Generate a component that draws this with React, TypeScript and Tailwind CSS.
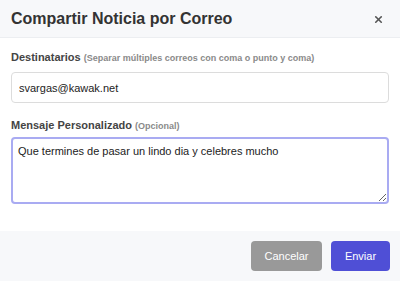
import { X } from 'lucide-react';

export default function App() {
  return (
    <div className="w-[400px] h-[281px] bg-white flex flex-col font-['Liberation_Sans',Arial,sans-serif] text-[#333]">
      <div className="h-[38px] bg-[#f7f8fa] border-b border-[#eceef1] flex items-center justify-between pl-[11px] pr-[16px]">
        <h2 className="text-[16px] font-bold text-[#333] leading-none">Compartir Noticia por Correo</h2>
        <X className="w-[11px] h-[11px] text-[#555] mt-[1px]" strokeWidth={3.5} />
      </div>

      <div className="flex-1 px-[11px] pt-[14px]">
        <label className="block text-[11px] font-bold text-[#444] leading-none mb-[9px]">
          Destinatarios{' '}
          <span className="text-[9px] text-[#8a8a8a]">(Separar múltiples correos con coma o punto y coma)</span>
        </label>
        <input
          className="w-full h-[31px] border border-[#dcdcdc] rounded-[4px] px-[7px] text-[11px] text-[#222] outline-none"
          defaultValue="svargas@kawak.net"
        />

        <label className="block text-[11px] font-bold text-[#444] leading-none mt-[17px] mb-[6px]">
          Mensaje Personalizado{' '}
          <span className="text-[9px] text-[#8a8a8a]">(Opcional)</span>
        </label>
        <textarea
          className="block w-full h-[67px] border-2 border-[#a9abf2] rounded-[4px] px-[5px] pt-[4px] text-[11px] text-[#222] outline-none"
          defaultValue="Que termines de pasar un lindo dia y celebres mucho"
        />
      </div>

      <div className="h-[50px] bg-[#f7f8fa] flex items-center justify-end gap-[9px] pr-[10px]">
        <button className="h-[30px] w-[71px] rounded-[4px] bg-[#999] text-white text-[11px]">Cancelar</button>
        <button className="h-[30px] w-[59px] rounded-[4px] bg-[#4f4fd6] text-white text-[11px]">Enviar</button>
      </div>
    </div>
  );
}
